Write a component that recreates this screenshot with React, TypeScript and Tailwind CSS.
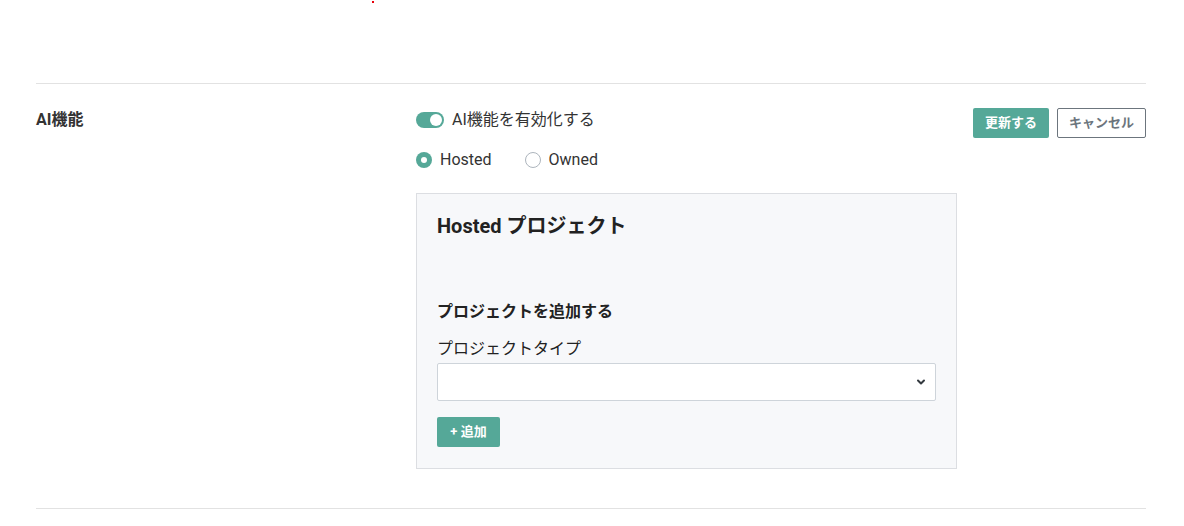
import { ChevronDown } from "lucide-react";

const font = "font-['Roboto','Noto_Sans_CJK_JP',sans-serif]";

function Toggle() {
  return (
    <span className="flex h-4 w-7 items-center justify-end rounded-full bg-[#55a898] px-[2px]">
      <span className="size-3 rounded-full bg-white" />
    </span>
  );
}

function Radio({ checked, label }: { checked?: boolean; label: string }) {
  return (
    <label className="flex items-center gap-2">
      {checked ? (
        <span className="flex size-4 items-center justify-center rounded-full bg-[#55a898]">
          <span className="size-[6px] rounded-full bg-white" />
        </span>
      ) : (
        <span className="size-4 rounded-full border border-[#adb5bd] bg-white" />
      )}
      <span className="text-base text-[#333]">{label}</span>
    </label>
  );
}

export default function App() {
  return (
    <div className={`${font} relative h-[526px] w-[1184px] bg-white text-[#212529]`}>
      <span className="absolute left-[372px] top-[1px] size-[2px] bg-red-600" />

      <div className="pl-9 pr-[38px] pt-[83px]">
        <section className="grid grid-cols-[380px_1fr_auto] border-y border-[#e2e2e2] pb-[39px] pt-6">
          <h3 className="text-base font-bold text-[#333]">AI機能</h3>

          <div className="flex flex-col">
            <label className="flex h-6 items-center gap-2">
              <Toggle />
              <span className="text-base text-[#333]">AI機能を有効化する</span>
            </label>

            <div className="mt-4 flex h-6 items-center gap-[33px]">
              <Radio checked label="Hosted" />
              <Radio label="Owned" />
            </div>

            <div className="mt-[21px] w-[541px] border border-[#dcdee2] bg-[#f7f8fa] px-5 pb-[21px] pt-[18px]">
              <h4 className="text-[20px] font-bold leading-7 text-[#222]">Hosted プロジェクト</h4>

              <h5 className="mt-[60px] text-base font-bold leading-6 text-[#222]">プロジェクトを追加する</h5>

              <p className="mt-[13px] text-base leading-6 text-[#222]">プロジェクトタイプ</p>
              <div className="relative mt-[2px]">
                <select className="h-[38px] w-full appearance-none rounded-[2px] border border-[#ced4da] bg-white px-3" />
                <ChevronDown
                  className="pointer-events-none absolute right-[9px] top-[13px] size-3 text-[#343a40]"
                  strokeWidth={4}
                />
              </div>

              <button className="mt-4 h-[30px] w-[63px] rounded-[2px] bg-[#55a898] text-[13px] font-bold text-white">
                + 追加
              </button>
            </div>
          </div>

          <div className="flex items-start gap-2">
            <button className="h-[30px] w-[76px] rounded-[2px] bg-[#55a898] text-[13px] font-bold text-white">
              更新する
            </button>
            <button className="h-[30px] w-[89px] rounded-[2px] border border-[#6c757d] bg-white text-[13px] font-bold text-[#6c757d]">
              キャンセル
            </button>
          </div>
        </section>
      </div>
    </div>
  );
}
